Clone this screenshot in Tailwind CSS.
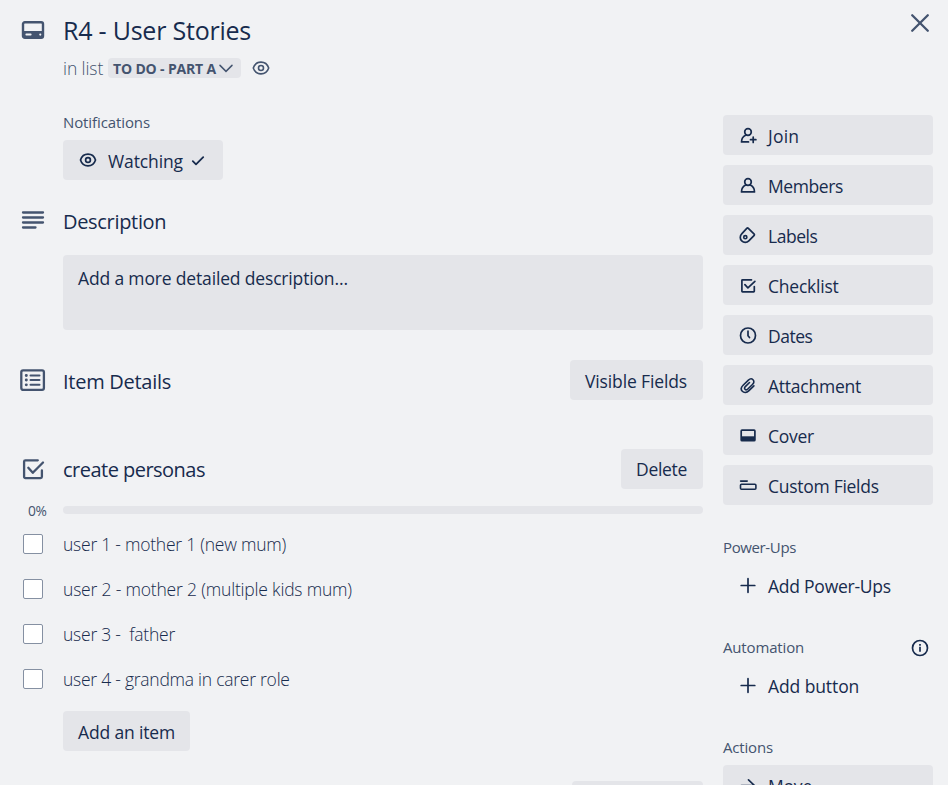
<!DOCTYPE html>
<html lang="en">
<head>
<meta charset="utf-8">
<title>R4 - User Stories</title>
<script src="https://cdn.jsdelivr.net/npm/@tailwindcss/browser@4"></script>
</head>
<body class="relative flex h-[785px] w-[948px] flex-col overflow-hidden bg-[#f1f2f4] font-['Open_Sans','Noto_Sans',sans-serif] text-[17.5px] text-[#172b4d]">

<!-- Header -->
<header class="flex h-[115px] shrink-0 items-start">
  <svg class="ml-5 mt-[17px] size-[26px] shrink-0 text-[#44546f]" viewBox="0 0 26 26" fill="none" stroke="currentColor">
    <rect x="3" y="5.2" width="20" height="15.6" rx="1.8" stroke-width="2.4"/>
    <path fill="currentColor" stroke="none" fill-rule="evenodd" d="M3 14h20v7H3zM6.3 16.6a.9.9 0 0 0 0 1.8h4.4a.9.9 0 0 0 0-1.8zM20.3 16.5a1.1 1.1 0 1 0 0 2.2 1.1 1.1 0 0 0 0-2.2z"/>
  </svg>
  <div class="ml-[17px] flex-1">
    <h1 class="mt-[15px] h-[30px] whitespace-pre text-[25px] leading-[30px] tracking-[-0.22px]">R4 - User Stories</h1>
    <div class="mt-[13px] flex h-5 items-center text-[#44546f]">
      <span class="w-[45px] whitespace-pre font-light leading-5 tracking-[-0.08px]">in list</span>
      <button class="flex h-5 w-[133px] items-center rounded-[4px] bg-[#e4e5e9] pl-[5px] text-[14px] font-bold leading-5 tracking-[-0.16px]">
        <span class="w-[104px] whitespace-pre pt-px text-left">TO DO - PART A</span>
        <svg class="ml-px size-4" viewBox="0 0 16 16" fill="none" stroke="currentColor" stroke-width="1.5" stroke-linecap="round"><path d="M2 5.4 8 11.4 14 5.4"/></svg>
      </button>
      <svg class="ml-[10px] size-5" viewBox="0 0 20 20" fill="none" stroke="currentColor" stroke-width="1.6"><path d="M2.3 10C3.6 6.2 6.4 4.1 10 4.1s6.400 2.100 7.700 5.900c-1.300 3.800-4.100 5.900-7.700 5.900S3.600 13.800 2.300 10z"/><circle cx="10" cy="10" r="2.500"/></svg>
    </div>
  </div>
  <button class="mr-[18px] mt-[13px] text-[#44546f]" aria-label="Close">
    <svg class="size-5" viewBox="0 0 20 20" fill="none" stroke="currentColor" stroke-width="2.3" stroke-linecap="round"><path d="M2.200 2.200 17.800 17.800M17.800 2.200 2.200 17.800"/></svg>
  </button>
</header>

<div class="flex flex-1 items-start">
  <!-- Main column -->
  <main class="w-[703px] shrink-0">
    <section class="pl-[63px]">
      <h3 class="flex h-[25px] items-start text-[15px] leading-[15px] tracking-[-0.1px] text-[#44546f]">Notifications</h3>
      <button class="flex h-10 w-40 items-center rounded-[4px] bg-[#e4e5e9] pl-[15px]">
        <svg class="size-5" viewBox="0 0 20 20" fill="none" stroke="currentColor" stroke-width="1.7"><path d="M2.500 10C3.700 6.200 6.400 4.100 10 4.100s6.300 2.100 7.500 5.900c-1.200 3.800-3.900 5.900-7.500 5.900S3.700 13.800 2.500 10z"/><circle cx="10" cy="10" r="2.400"/></svg>
        <span class="ml-[10px] w-[80px] whitespace-pre pt-[2px] text-left tracking-[-0.11px]">Watching</span>
        <svg class="size-5" viewBox="0 0 20 20" fill="none" stroke="currentColor" stroke-width="1.800" stroke-linecap="round" stroke-linejoin="round"><path d="M4.800 11.200 8 14.300 15.200 7.200"/></svg>
      </button>
    </section>

    <section>
      <div class="flex h-[75px] items-center">
        <svg class="ml-5 mt-[5px] size-[26px] text-[#44546f]" viewBox="0 0 26 26" fill="none" stroke="currentColor" stroke-width="2.300" stroke-linecap="round"><path d="M3 5.500h20M3 10.500h20M3 15.500h20M3 20.500h12.500"/></svg>
        <h2 class="ml-[17px] mt-[8px] text-[20px] leading-6 tracking-[-0.32px]">Description</h2>
      </div>
      <div class="ml-[63px] h-[75px] rounded-[4px] bg-[#e4e5e9] px-[15px] pt-[10px] leading-[27px] tracking-[-0.16px]">Add a more detailed description…</div>
    </section>

    <section class="mt-[30px] flex h-10 items-center">
      <svg class="ml-5 size-[26px] text-[#44546f]" viewBox="0 0 26 26" fill="none" stroke="currentColor" stroke-width="2">
        <rect x="1.300" y="3.300" width="22.600" height="19.600" rx="1.800" stroke-width="2.300"/>
        <path stroke-linecap="round" d="M10.500 8.500h9M10.500 13h9M10.500 17.800h9"/>
        <path stroke-width="2.800" stroke-linecap="round" d="M6.200 8.500h.2M6.200 13h.2M6.200 17.800h.2"/>
      </svg>
      <h2 class="ml-[17px] flex-1 pt-[4px] text-[20px] leading-6 tracking-[-0.27px]">Item Details</h2>
      <button class="h-10 w-[133px] whitespace-pre rounded-[4px] bg-[#e4e5e9] pl-[15px] pt-[3px] text-left tracking-[-0.13px]">Visible Fields</button>
    </section>

    <section class="mt-[49px]">
      <div class="flex h-10 items-center">
        <svg class="ml-5 size-[26px] text-[#44546f]" viewBox="0 0 26 26" fill="none" stroke="currentColor" stroke-width="2.300" stroke-linecap="round" stroke-linejoin="round"><path d="M17.800 4.300H5.400A1.300 1.300 0 0 0 4.100 5.600v15.200a1.300 1.300 0 0 0 1.300 1.300h15.200a1.300 1.300 0 0 0 1.300-1.300v-6.300"/><path d="M8.300 11.800 12.800 16.800 23 6.500"/></svg>
        <h2 class="ml-[17px] flex-1 whitespace-pre pt-[2px] text-[20px] leading-6 tracking-[-0.52px]">create personas</h2>
        <button class="h-10 w-[82px] rounded-[4px] bg-[#e4e5e9] pl-[15px] text-left tracking-[-0.3px]">Delete</button>
      </div>
      <div class="mt-[11px] flex h-5 items-center">
        <span class="w-[63px] pl-[28px] pt-px text-[13.75px] font-normal leading-5 tracking-[-0.3px] text-[#44546f]">0%</span>
        <div class="h-2 w-[640px] rounded-full bg-[#e4e5e9]"></div>
      </div>
      <ul class="mt-px font-light">
        <li class="flex h-[45px] items-center"><span class="ml-[23px] size-5 rounded-[2px] border border-[#8590a2] bg-white"></span><span class="ml-5 whitespace-pre pt-[2px] tracking-[-0.24px]">user 1 - mother 1 (new mum)</span></li>
        <li class="flex h-[45px] items-center"><span class="ml-[23px] size-5 rounded-[2px] border border-[#8590a2] bg-white"></span><span class="ml-5 whitespace-pre pt-[2px] tracking-[-0.19px]">user 2 - mother 2 (multiple kids mum)</span></li>
        <li class="flex h-[45px] items-center"><span class="ml-[23px] size-5 rounded-[2px] border border-[#8590a2] bg-white"></span><span class="ml-5 whitespace-pre pt-[2px] tracking-[-0.24px]">user 3 -  father</span></li>
        <li class="flex h-[45px] items-center"><span class="ml-[23px] size-5 rounded-[2px] border border-[#8590a2] bg-white"></span><span class="ml-5 whitespace-pre pt-[2px] tracking-[-0.25px]">user 4 - grandma in carer role</span></li>
      </ul>
      <button class="ml-[63px] mt-[10px] h-10 w-[127px] whitespace-pre rounded-[4px] bg-[#e4e5e9] pl-[15px] pt-[2px] text-left tracking-[-0.16px]">Add an item</button>
    </section>
    <div class="mt-[30px] flex justify-end"><div class="h-10 w-[131px] rounded-[4px] bg-[#e4e5e9]"></div></div>
  </main>

  <!-- Sidebar -->
  <aside class="ml-5 w-[210px] shrink-0">
    <div class="flex flex-col gap-[10px]">
      <button class="flex h-10 items-center gap-[10px] rounded-[4px] bg-[#e4e5e9] pl-[15px] pt-px">
        <svg class="size-5" viewBox="0 0 20 20" fill="none" stroke="currentColor" stroke-width="1.700" stroke-linecap="round" stroke-linejoin="round"><circle cx="10" cy="6" r="3.300"/><path d="M7.600 9.200C5 10.400 3.500 12.700 3.500 15.900h7"/><path d="M15.200 11v5.400M12.500 13.700h5.400"/></svg>
        <span class="pt-px tracking-[0.2px]">Join</span>
      </button>
      <button class="flex h-10 items-center gap-[10px] rounded-[4px] bg-[#e4e5e9] pl-[15px] pt-px">
        <svg class="size-5" viewBox="0 0 20 20" fill="none" stroke="currentColor" stroke-width="1.700" stroke-linecap="round" stroke-linejoin="round"><circle cx="10" cy="6" r="3.300"/><path d="M7.700 9.100C5.200 10.300 3.500 12.800 3.500 15.900h13c0-3.100-1.700-5.600-4.200-6.800"/></svg>
        <span class="pt-px tracking-[-0.4px]">Members</span>
      </button>
      <button class="flex h-10 items-center gap-[10px] rounded-[4px] bg-[#e4e5e9] pl-[15px] pt-px">
        <svg class="size-5" viewBox="0 0 20 20" fill="none" stroke="currentColor" stroke-width="1.700" stroke-linejoin="round"><path d="M10.100 2.200 16.200 8.200a.8.8 0 0 1 0 1.100L10.800 14.900A4.950 4.950 0 0 1 3.700 7.900L9 2.200a.8.8 0 0 1 1.100 0z"/><circle cx="7.300" cy="11.200" r="1.600" stroke-width="1.600"/></svg>
        <span class="pt-px tracking-[-0.45px]">Labels</span>
      </button>
      <button class="flex h-10 items-center gap-[10px] rounded-[4px] bg-[#e4e5e9] pl-[15px] pt-px">
        <svg class="size-5" viewBox="0 0 20 20" fill="none" stroke="currentColor" stroke-width="1.700" stroke-linecap="round" stroke-linejoin="round"><path d="M13.500 3.800H4.500a.6.6 0 0 0-.6.600v10.800a.6.6 0 0 0 .6.600h11.200a.6.6 0 0 0 .6-.600V10.500"/><path d="M6.900 8.600 9.900 11.900 16.900 5.400"/></svg>
        <span class="pt-px tracking-[-0.22px]">Checklist</span>
      </button>
      <button class="flex h-10 items-center gap-[10px] rounded-[4px] bg-[#e4e5e9] pl-[15px] pt-px">
        <svg class="size-5" viewBox="0 0 20 20" fill="none" stroke="currentColor" stroke-width="1.700" stroke-linecap="round"><circle cx="10" cy="9.500" r="7.500"/><path d="M10 5.200v4.600l1.500 1.700"/></svg>
        <span class="pt-px tracking-[-0.5px]">Dates</span>
      </button>
      <button class="flex h-10 items-center gap-[10px] rounded-[4px] bg-[#e4e5e9] pl-[15px] pt-px">
        <svg class="size-5" viewBox="0 0 20 20" fill="none" stroke="currentColor" stroke-width="1.600" stroke-linecap="round" stroke-linejoin="round"><path d="M15.900 9.900 10.700 14.900C8.800 16.700 6 17 4.300 15.300S3.300 11.100 5.100 9.300L10.400 4.100C11.900 2.700 13.800 2.500 15 3.700S16.200 6.800 14.700 8.200L9.800 13C8.900 13.900 7.700 14 7 13.300S6.400 11.500 7.300 10.600L11.500 6.500"/></svg>
        <span class="pt-px tracking-[-0.24px]">Attachment</span>
      </button>
      <button class="flex h-10 items-center gap-[10px] rounded-[4px] bg-[#e4e5e9] pl-[15px] pt-px">
        <svg class="size-5" viewBox="0 0 20 20" fill="none" stroke="currentColor" stroke-width="1.700"><rect x="3.200" y="4.200" width="13.700" height="10.500" rx=".8"/><path fill="currentColor" stroke="none" d="M3 10.300h14v4.400H3z"/></svg>
        <span class="pt-px tracking-[-0.3px]">Cover</span>
      </button>
      <button class="flex h-10 items-center gap-[10px] rounded-[4px] bg-[#e4e5e9] pl-[15px] pt-px">
        <svg class="size-5" viewBox="0 0 20 20" fill="none" stroke="currentColor" stroke-width="1.600"><path stroke-linecap="round" d="M2.600 5.100h6.600"/><rect x="2.500" y="8.300" width="15.400" height="5" rx="1"/></svg>
        <span class="pt-px tracking-[-0.28px]">Custom Fields</span>
      </button>
    </div>

    <h3 class="mt-[35px] flex h-[25px] items-start text-[15px] leading-[15px] tracking-[-0.37px] text-[#44546f]">Power-Ups</h3>
    <button class="flex h-10 items-center gap-[10px] pl-[15px] pt-px">
      <svg class="size-5" viewBox="0 0 20 20" fill="none" stroke="currentColor" stroke-width="1.700" stroke-linecap="round"><path d="M10 2.700v13.600M3.200 9.500h13.600"/></svg>
      <span class="pt-px tracking-[-0.24px]">Add Power-Ups</span>
    </button>

    <div class="mt-[33px] flex h-[20px] items-center justify-between text-[15px] leading-5 tracking-[-0.16px] text-[#44546f]">
      <h3 class="pb-[2px]">Automation</h3>
      <svg class="mr-[3px] size-5 text-[#172b4d]" viewBox="0 0 20 20" fill="none" stroke="currentColor" stroke-width="1.700"><circle cx="10" cy="10" r="7.500"/><path d="M10 8.800v5M10 6v1.700"/></svg>
    </div>
    <button class="mt-[7px] flex h-10 items-center gap-[10px] pl-[15px] pt-px">
      <svg class="size-5" viewBox="0 0 20 20" fill="none" stroke="currentColor" stroke-width="1.700" stroke-linecap="round"><path d="M10 2.700v13.600M3.200 9.500h13.600"/></svg>
      <span class="pt-px tracking-[-0.1px]">Add button</span>
    </button>

    <h3 class="mt-[35px] flex h-[25px] items-start text-[15px] leading-[15px] tracking-[-0.17px] text-[#44546f]">Actions</h3>
    <button class="flex h-10 w-full items-center gap-[10px] rounded-[4px] bg-[#e4e5e9] pl-[15px] pt-px">
      <svg class="size-5" viewBox="0 0 20 20" fill="none" stroke="currentColor" stroke-width="1.700" stroke-linecap="round" stroke-linejoin="round"><path d="M3.300 9.500h13M10.500 3.800l6 5.700-6 5.700"/></svg>
      <span class="pt-px tracking-[-0.2px]">Move</span>
    </button>
  </aside>
</div>
</body>
</html>
